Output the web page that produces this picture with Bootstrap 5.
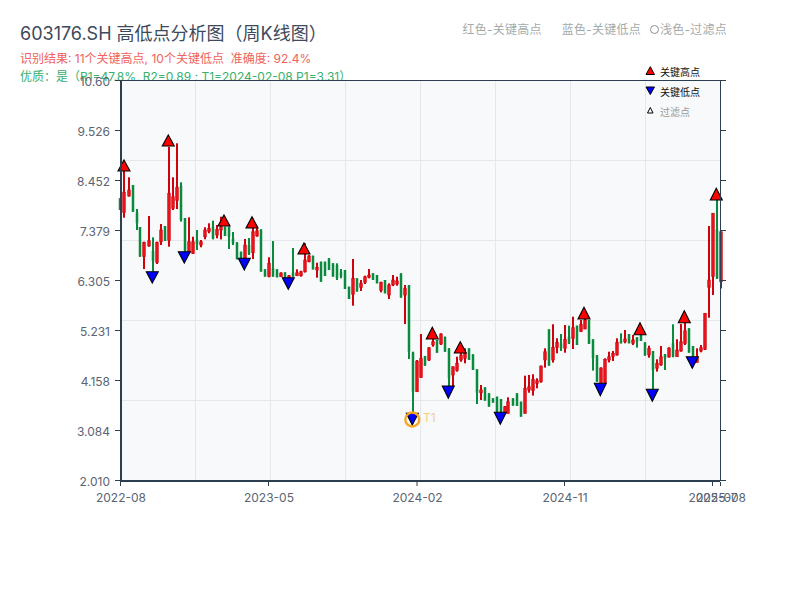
<!DOCTYPE html>
<html lang="zh">
<head>
<meta charset="utf-8">
<title>603176.SH</title>
<link href="https://cdn.jsdelivr.net/npm/bootstrap@5.3.0/dist/css/bootstrap.min.css" rel="stylesheet">
<style>
body{margin:0;background:#fff;font-family:Inter,"Noto Sans CJK SC",sans-serif;overflow:hidden}
.page-box{width:800px;height:600px}
.head-box{height:72px;padding:22px 73px 0 20px}
.head-title{font-size:18px;line-height:24px;color:#3c4a5c;font-weight:400;margin:0}
.head-red{font-size:12px;line-height:16px;color:#f0625a;margin-top:5px;white-space:nowrap}
.head-green{font-size:12px;line-height:16px;color:#38b06e;margin-top:2px;white-space:nowrap}
.head-legend{font-size:12px;line-height:16px;color:#a3abab;white-space:nowrap;letter-spacing:.25px}
.head-gap{margin-right:20px}
.head-gap2{margin-right:9px}
.dot-mark{display:inline-block;width:9px;height:9px;border:1px solid #8a9090;border-radius:50%;margin-right:1px}
.chart-svg{display:block;position:relative;overflow:visible}
.chart-svg text{font-family:Inter,"Noto Sans CJK SC",sans-serif}
.ax-lab{font-size:12px;fill:#5a6472}
.leg-lab{font-size:10px;fill:#111}
.leg-mute{font-size:10px;fill:#999}
</style>
</head>
<body>
<div class="page-box">
  <div class="head-box d-flex justify-content-between align-items-start">
    <div>
      <h1 class="head-title">603176.SH 高低点分析图（周K线图）</h1>
      <div class="head-red">识别结果: 11个关键高点, 10个关键低点&nbsp;&nbsp;准确度: 92.4%</div>
      <div class="head-green">优质：是（R1=47.8%, R2=0.89 ; T1=2024-02-08 P1=3.31）</div>
    </div>
    <div class="head-legend d-flex align-items-center">
      <span class="head-gap">红色-关键高点</span><span class="head-gap2">蓝色-关键低点</span><span><span class="dot-mark"></span>浅色-过滤点</span>
    </div>
  </div>
  <svg id="chart" class="chart-svg" width="800" height="528" viewBox="0 72 800 528" xmlns="http://www.w3.org/2000/svg"></svg>
</div>
<script>
const S1=[[60,'g',205,240],[73,'r',120,263,187,248],[86,'r',142,200,180,198],[98,'g',165,245],[110,'g',237,300,247,280],[121,'g',291,380],[133,'r',335,417,337,380],[146,'r',258,350,332,348],[158,'g',322,425,363,393],[170,'r',335,402,337,398],[182,'r',282,345,300,335],[194,'g',288,333],[206,'r',50,350,190,332],[218,'r',142,240,200,235],[230,'r',40,237,172,212],[242,'g',157,275,168,270],[254,'g',264,365],[266,'r',262,370,335,368],[278,'r',320,372,335,370],[290,'g',300,360,330,342],[302,'r',330,352,335,345],[314,'r',292,328,300,320],[326,'r',280,310,295,305],[338,'g',272,328,290,325],[350,'r',285,325,298,315],[362,'r',260,328,290,300],[374,'g',290,318],[386,'g',290,357,290,320],[398,'g',306,345,325,340],[410,'g',337,388],[422,'g',365,385],[434,'r',327,385,345,385],[446,'g',324,375,345,372],[458,'r',265,387,305,368],[470,'r',290,320,302,318],[482,'g',298,425],[494,'g',418,440],[506,'r',382,442,400,440],[518,'g',333,440,415,440],[530,'g',418,442],[542,'r',427,440,429,440],[554,'g',427,445],[566,'r',435,470,437,445],[578,'g',354,440,428,440],[590,'r',418,437,428,437],[602,'r',422,440,425,437],[614,'r',340,428,390,425],[626,'r',375,397,378,395],[638,'g',377,418],[650,'r',398,443,412,420]];
const S2=[[3,'g',35,95],[15,'g',35,78],[27,'g',25,60],[39,'g',40,80],[51,'g',40,90,45,85],[63,'g',57,85,65,80],[75,'g',60,117],[87,'g',110,147],[99,'r',27,167,85,133],[111,'g',85,125],[123,'r',90,123,100,113],[135,'r',77,102,80,97],[147,'r',57,85,75,82],[159,'g',70,90],[171,'g',75,100],[183,'r',95,127,97,122],[195,'g',90,130],[207,'r',100,147,105,135],[219,'r',75,108,90,105],[231,'r',80,107,93,102],[243,'g',70,143],[255,'r',105,222,115,135],[267,'g',105,327,105,305],[279,'g',305,490,307,425],[291,'r',330,425,333,425],[303,'r',252,383,325,383],[315,'g',318,347],[327,'r',292,333,293,330],[339,'r',245,290,275,285],[351,'g',270,308],[363,'r',250,285,252,282],[375,'g',260,305],[387,'g',295,410,295,385],[399,'r',350,408,350,375],[411,'r',320,365,340,362],[423,'r',285,335,315,330],[435,'r',295,340,310,325],[447,'g',295,330],[459,'g',313,360],[471,'g',358,462,358,428],[483,'r',405,450,420,428],[495,'g',412,452],[507,'g',430,470],[519,'g',445,458],[531,'g',440,490],[543,'g',447,490],[555,'r',468,490,470,490],[564,'r',442,490,455,490],[579,'g',445,467],[591,'g',430,468],[603,'g',455,500],[615,'r',377,490,415,490],[627,'r',375,428,410,420]];
const S3=[[8,'r',583,647,598,632],[20,'r',595,625,602,610],[32,'r',557,608,558,605],[44,'r',505,563,515,540],[56,'g',448,557],[68,'r',433,548,502,540],[80,'r',475,520,487,503],[92,'g',462,513,490,505],[104,'r',435,518,478,505],[116,'g',437,492,470,490],[128,'r',410,507,443,475],[140,'g',437,495],[152,'r',420,455,433,455],[164,'r',395,447,420,447],[176,'g',420,492],[188,'g',478,572,478,535],[200,'g',525,605],[212,'r',562,610,564,610],[224,'r',535,610,538,608],[236,'r',515,547,530,540],[248,'r',513,543,520,530],[260,'r',475,527,487,525],[272,'g',460,490,482,490],[284,'r',450,490,477,485],[296,'g',462,490],[308,'r',465,495,480,490],[320,'g',472,503,472,485],[332,'g',435,483,462,483],[344,'g',487,527],[356,'r',497,533,505,525],[368,'g',513,630,513,570],[380,'r',538,575,550,565],[392,'r',498,557,530,555],[404,'g',522,570,522,535],[416,'r',502,533,504,531],[428,'g',433,532,490,530],[440,'r',478,530,510,530],[452,'r',432,515,485,513],[464,'r',425,495,452,490],[476,'g',445,518],[488,'g',498,530],[500,'r',505,547,530,547],[512,'r',495,517,503,513],[524,'r',400,510,400,508],[536,'r',138,413,300,322],[548,'r',100,345,100,290],[560,'g',60,297,148,295],[572,'r',155,325,155,305]];
const ups=[[124,160,171],[168.3,135,146],[224,215,226],[252,216.7,228],[304,243,254],[432.3,327.3,339],[460.3,341.7,353],[584,307.3,319],[640,322.7,334.7],[684.3,310.7,322.7],[716.3,188.3,200]];
const downs=[[152.3,271.7,283],[184.3,251.7,263],[244.3,258.3,270],[288.3,277.7,289.3],[412.3,413.3,425],[448.3,386,398.3],[500.3,412.3,424.3],[600.3,383.3,395.7],[652.3,389.3,401.3],[692.3,356.7,368.3]];
let h='';
h+='<rect x="120" y="80" width="600" height="401" fill="#f7f9fb"/>';
[160,240,320,400].forEach(y=>h+=`<line x1="120" x2="720" y1="${y+.5}" y2="${y+.5}" stroke="#e4e7ec"/>`);
[195,270,345,420,495,570,645].forEach(x=>h+=`<line y1="80" y2="481" x1="${x+.5}" x2="${x+.5}" stroke="#e4e7ec"/>`);
function cs(d,ox,oy){d.forEach(c=>{const x=Math.round(ox+c[0]/3);const g=c[1]==='g';const hi=oy+c[2]/3,lo=oy+c[3]/3;const top=oy+(c[4]??c[2])/3,bot=oy+(c[5]??c[3])/3;
 const col=g?'#0a8a3c':'#d0020c',fill=g?'#0a8a3c':'#ea141c';
 h+=`<rect x="${x-1}" y="${hi.toFixed(1)}" width="2" height="${(lo-hi).toFixed(1)}" fill="${col}"/>`;
 h+=`<rect x="${x-1.25}" y="${top.toFixed(1)}" width="2.5" height="${(bot-top).toFixed(1)}" fill="${fill}"/>`;
 if(!g)h+=`<rect x="${x-1.25}" y="${top.toFixed(1)}" width="2.5" height="${(bot-top).toFixed(1)}" fill="none" stroke="${col}" stroke-width=".7"/>`;});}
cs(S1,100,130);cs(S2,320,250);cs(S3,530,180);
ups.forEach(u=>h+=`<polygon points="${u[0]},${u[1]} ${u[0]+6},${u[2]} ${u[0]-6},${u[2]}" fill="#f00" stroke="#000" stroke-width="1.1"/>`);
downs.forEach(u=>h+=`<polygon points="${u[0]},${u[2]} ${u[0]+6},${u[1]} ${u[0]-6},${u[1]}" fill="#00f" stroke="#000" stroke-width="1.1"/>`);
h+='<circle cx="412.3" cy="419.5" r="7" fill="none" stroke="#f5a623" stroke-width="2.4"/>';
h+='<text x="423" y="422" font-size="12" fill="#f5a623" fill-opacity=".55">T1</text>';
/* axes */
const ax='#2c3e50';
h+=`<line x1="120" x2="720" y1="80.5" y2="80.5" stroke="${ax}"/><line x1="720.5" x2="720.5" y1="80" y2="481" stroke="${ax}"/>`;
h+=`<line x1="121" x2="121" y1="80" y2="482" stroke="${ax}" stroke-width="2"/><line x1="120" x2="720" y1="481" y2="481" stroke="${ax}" stroke-width="2"/>`;
const ly=['10.60','9.526','8.452','7.379','6.305','5.231','4.158','3.084','2.010'];
ly.forEach((t,i)=>{const y=81+i*50;h+=`<line x1="115" x2="120" y1="${y-.5}" y2="${y-.5}" stroke="${ax}"/><line x1="721" x2="726" y1="${y-.5}" y2="${y-.5}" stroke="${ax}"/>`;
 h+=`<text class="ax-lab" x="110" y="${y+4.5}" text-anchor="end">${t}</text>`;});
[[120.5,'2022-08'],[268.5,'2023-05'],[417,'2024-02'],[564.5,'2024-11'],[712.5,'2025-07'],[720.5,'2025-08']].forEach(a=>{
 h+=`<line x1="${a[0]}" x2="${a[0]}" y1="482" y2="486" stroke="${ax}"/><text class="ax-lab" x="${a[0]+.5}" y="502" text-anchor="middle">${a[1]}</text>`;});
/* legend */
h+='<polygon points="650.3,66.7 654.5,74.5 646,74.5" fill="#f00" stroke="#000"/><text class="leg-lab" x="660" y="76">关键高点</text>';
h+='<polygon points="650.3,94.5 654.5,87 646,87" fill="#00f" stroke="#000"/><text class="leg-lab" x="660" y="96">关键低点</text>';
h+='<polygon points="650.3,107.5 653,113 647.5,113" fill="#fff" stroke="#000"/><text class="leg-lab leg-mute" x="660" y="116">过滤点</text>';
document.getElementById('chart').innerHTML=h;
</script>
<script src="https://cdn.jsdelivr.net/npm/bootstrap@5.3.0/dist/js/bootstrap.bundle.min.js"></script>
</body>
</html>
